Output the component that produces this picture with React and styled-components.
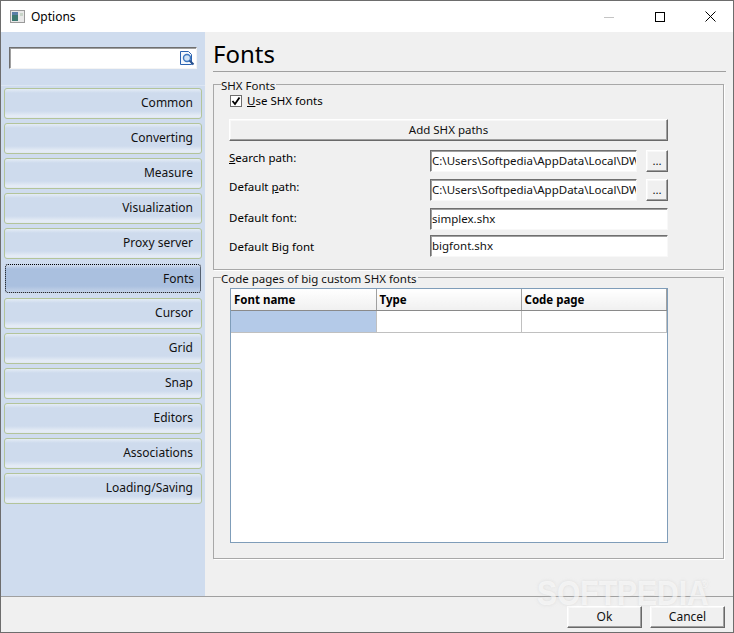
import React from "react";
import styled, { createGlobalStyle } from "styled-components";

const Global = createGlobalStyle`
  html, body {
    margin: 0;
    padding: 0;
    background: #f0f0f0;
  }
  * {
    box-sizing: border-box;
  }
`;

const Win = styled.div`
  position: relative;
  width: 734px;
  height: 633px;
  display: flex;
  flex-direction: column;
  border: 1px solid #6d6d6d;
  background: #f0f0f0;
  font-family: "Noto Sans", "Liberation Sans", sans-serif;
  font-size: 12px;
  color: #000;
  overflow: hidden;
`;
const TitleBar = styled.div`
  height: 31px;
  flex: none;
  background: #fff;
  display: flex;
  align-items: center;
  padding-left: 9px;
  gap: 6px;
`;
const TitleText = styled.span`
  flex: 1;
  font-size: 12px;
  margin-top: -1px;
`;
const WinBtn = styled.div`
  width: 45px;
  height: 31px;
  display: flex;
  align-items: center;
  justify-content: center;
`;
const Body = styled.div`
  flex: 1;
  display: flex;
  min-height: 0;
`;
const Side = styled.div`
  width: 204px;
  flex: none;
  background: #cfdcee;
`;
const SearchArea = styled.div`
  height: 54px;
  padding: 15px 8px 0 8px;
  border-bottom: 1px solid #dce6f3;
`;
const SearchBox = styled.div`
  width: 188px;
  height: 22px;
  background: #fff;
  border: 1px solid #f4f4f4;
  border-top: 1px solid #6f6f6f;
  border-left: 1px solid #6f6f6f;
  box-shadow: inset 1px 1px 0 #a0a0a0;
  display: flex;
  align-items: center;
  justify-content: flex-end;
  padding-right: 1px;
`;
const NavList = styled.div`
  display: flex;
  flex-direction: column;
  gap: 4px;
  padding: 2px 3px 0 3px;
`;
const NavBtn = styled.div`
  border-radius: 3px;
  border: 1px ${(p) => (p.$active ? "dotted #000" : "solid #b3c49a")};
  margin: ${(p) => (p.$active ? "1px" : "0")};
  height: ${(p) => (p.$active ? "29px" : "31px")};
  display: flex;
  align-items: center;
  justify-content: flex-end;
  padding-right: ${(p) => (p.$active ? "6px" : "8px")};
  padding-bottom: ${(p) => (p.$active ? "1px" : "3px")};
  color: #111;
  background: ${(p) =>
    p.$active
      ? "linear-gradient(#d0dcee 0, #aac0df 4px, #aac0df 21px, #c4d3e9 27px, #c4d3e9 100%)"
      : "linear-gradient(#e4ecf6 0, #cedbed 4px, #cedbed 22px, #e6edf6 27px, #dfe7f3 100%)"};
`;
const Main = styled.div`
  flex: 1;
  min-width: 0;
  padding: 6px 7px 0 8px;
  display: flex;
  flex-direction: column;
  font-size: 11.5px;
`;
const Heading = styled.div`
  font-size: 24px;
  line-height: 31px;
  height: 34px;
  border-bottom: 1px solid #a0a0a0;
`;
const Group = styled.fieldset`
  margin: ${(p) => p.$top}px 2px 0 0;
  height: ${(p) => p.$h}px;
  position: relative;
  border: 1px solid #a8a8a8;
  box-shadow: 1px 1px 0 #fff;
  min-width: 0;
  padding: 5px 55px 0 15px;
`;
const Legend = styled.div`
  position: absolute;
  top: -6px;
  left: 7px;
  padding: 0 1px 0 0;
  line-height: 14px;
  background: #f0f0f0;
  color: #111;
`;
const CheckRow = styled.label`
  display: flex;
  align-items: center;
  gap: 5px;
  height: 22px;
  & > span {
    margin-top: -2px;
  }
`;
const CheckMark = styled.div`
  width: 12px;
  height: 12px;
  background: #fff;
  border: 1px solid #6e6e6e;
  display: flex;
  align-items: center;
  justify-content: center;
  margin-left: 1px;
`;
const RaisedBtn = styled.div`
  height: 22px;
  width: ${(p) => p.$w || "auto"};
  display: flex;
  align-items: center;
  justify-content: center;
  padding-bottom: 2px;
  background: #f0f0f0;
  border: 1px solid;
  border-color: #fff #696969 #696969 #fff;
  box-shadow: inset -1px -1px 0 #a0a0a0, inset 1px 1px 0 #f8f8f8;
  flex: none;
  color: #111;
`;
const AddBtn = styled(RaisedBtn)`
  margin-top: 7px;
`;
const FieldRow = styled.div`
  display: flex;
  align-items: center;
  height: 22px;
  margin-top: ${(p) => p.$mt}px;
`;
const FieldLabel = styled.span`
  width: 201px;
  flex: none;
  margin-top: ${(p) => p.$up || 0}px;
`;
const TextInput = styled.div`
  flex: 1;
  min-width: 0;
  height: 22px;
  background: #fff;
  border: 1px solid #f8f8f8;
  border-top: 1px solid #6f6f6f;
  border-left: 1px solid #6f6f6f;
  box-shadow: inset 1px 1px 0 #a0a0a0;
  padding-left: 1px;
  line-height: 20px;
  white-space: nowrap;
  overflow: hidden;
  color: #111;
`;
const BrowseBtn = styled(RaisedBtn)`
  margin-left: 9px;
  width: 22px;
`;
const Under = styled.span`
  text-decoration: underline;
`;
const GridWrap = styled.div`
  height: 255px;
  border: 1px solid #7f9db9;
  background: #fff;
  margin: 5px 0 0 1px;
`;
const Table = styled.table`
  border-collapse: collapse;
  table-layout: fixed;
  width: 435px;
  & th {
    height: 21px;
    padding: 0 3px;
    text-align: left;
    font-size: 11.5px;
    font-weight: 700;
    background: linear-gradient(#ffffff, #f0f0f0);
    border-right: 1px solid #a0a0a0;
    border-bottom: 1px solid #8a8a8a;
  }
  & td {
    height: 22px;
    border-right: 1px solid #c0c0c0;
    border-bottom: 1px solid #c0c0c0;
    padding: 0;
  }
`;
const SelCell = styled.td`
  background: #b4cae8;
`;
const Footer = styled.div`
  height: 36px;
  flex: none;
  border-top: 1px solid #a0a0a0;
  display: flex;
  justify-content: flex-end;
  gap: 8px;
  padding: 9px 8px 0 0;
`;
const Watermark = styled.div`
  position: absolute;
  left: 536px;
  top: 578px;
  font-family: "Liberation Sans", sans-serif;
  font-size: 30px;
  line-height: 26px;
  height: 26px;
  font-weight: 700;
  color: rgba(255, 255, 255, 0.6);
  text-shadow: 0 0 3px rgba(190, 190, 190, 0.4);
  transform: scaleY(1.15);
  transform-origin: top left;
  pointer-events: none;
`;
const Reg = styled.span`
  position: absolute;
  left: 164px;
  top: 0;
  font-size: 9px;
  line-height: 10px;
  font-weight: 400;
`;

const navItems = [
  "Common",
  "Converting",
  "Measure",
  "Visualization",
  "Proxy server",
  "Fonts",
  "Cursor",
  "Grid",
  "Snap",
  "Editors",
  "Associations",
  "Loading/Saving",
];

const AppIcon = () => (
  <svg width="15" height="13" viewBox="0 0 15 13">
    <rect x="0.5" y="0.5" width="14" height="12" fill="#e8e8e8" stroke="#9a9a9a" />
    <rect x="2" y="2" width="6" height="9" fill="#3d7a72" />
    <rect x="2" y="2" width="6" height="3" fill="#5a7fa8" />
    <rect x="10" y="3" width="3" height="3" fill="#c8d4c8" />
  </svg>
);

const SearchIcon = () => (
  <svg width="16" height="16" viewBox="0 0 16 16">
    <path d="M1.5 1.5h8l3 3v10h-11z" fill="#f4f8fd" stroke="#2a62b0" />
    <circle cx="8" cy="8" r="3.5" fill="#cfe2f6" stroke="#3f78c0" strokeWidth="1.4" />
    <path d="M10.5 10.5l4 4" stroke="#26508f" strokeWidth="2" />
  </svg>
);

export default function App() {
  return (
    <Win>
      <Global />
      <TitleBar>
        <AppIcon />
        <TitleText>Options</TitleText>
        <WinBtn>
          <svg width="10" height="10" viewBox="0 0 10 10">
            <path d="M0 5.5h10" stroke="#c4c4c4" />
          </svg>
        </WinBtn>
        <WinBtn>
          <svg width="10" height="10" viewBox="0 0 10 10">
            <rect x="0.5" y="0.5" width="9" height="9" fill="none" stroke="#000" />
          </svg>
        </WinBtn>
        <WinBtn>
          <svg width="11" height="11" viewBox="0 0 11 11">
            <path d="M0.5 0.5l10 10M10.5 0.5l-10 10" stroke="#000" />
          </svg>
        </WinBtn>
      </TitleBar>
      <Body>
        <Side>
          <SearchArea>
            <SearchBox>
              <SearchIcon />
            </SearchBox>
          </SearchArea>
          <NavList>
            {navItems.map((n) => (
              <NavBtn key={n} $active={n === "Fonts"}>
                {n}
              </NavBtn>
            ))}
          </NavList>
        </Side>
        <Main>
          <Heading>Fonts</Heading>
          <Group $top={12} $h={186}>
            <Legend>SHX Fonts</Legend>
            <CheckRow>
              <CheckMark>
                <svg width="10" height="10" viewBox="0 0 10 10">
                  <path d="M1.5 5l2.5 3 4.5-6.5" fill="none" stroke="#000" strokeWidth="1.8" />
                </svg>
              </CheckMark>
              <span>
                <Under>U</Under>se SHX fonts
              </span>
            </CheckRow>
            <AddBtn>Add SHX paths</AddBtn>
            <FieldRow $mt={9}>
              <FieldLabel $up={-7}>
                <Under>S</Under>earch path:
              </FieldLabel>
              <TextInput>C:\Users\Softpedia\AppData\Local\DW</TextInput>
              <BrowseBtn>...</BrowseBtn>
            </FieldRow>
            <FieldRow $mt={7}>
              <FieldLabel $up={-7}>
                Default <Under>p</Under>ath:
              </FieldLabel>
              <TextInput>C:\Users\Softpedia\AppData\Local\DW</TextInput>
              <BrowseBtn>...</BrowseBtn>
            </FieldRow>
            <FieldRow $mt={7}>
              <FieldLabel $up={-3}>Default font:</FieldLabel>
              <TextInput>simplex.shx</TextInput>
            </FieldRow>
            <FieldRow $mt={5}>
              <FieldLabel>Default Big font</FieldLabel>
              <TextInput>bigfont.shx</TextInput>
            </FieldRow>
          </Group>
          <Group $top={7} $h={282}>
            <Legend>Code pages of big custom SHX fonts</Legend>
            <GridWrap>
              <Table>
                <colgroup>
                  <col width="145" />
                  <col width="145" />
                  <col width="145" />
                </colgroup>
                <thead>
                  <tr>
                    <th>Font name</th>
                    <th>Type</th>
                    <th>Code page</th>
                  </tr>
                </thead>
                <tbody>
                  <tr>
                    <SelCell />
                    <td />
                    <td />
                  </tr>
                </tbody>
              </Table>
            </GridWrap>
          </Group>
        </Main>
      </Body>
      <Footer>
        <RaisedBtn $w="75px">Ok</RaisedBtn>
        <RaisedBtn $w="75px">Cancel</RaisedBtn>
      </Footer>
      <Watermark>
        SOFTPEDIA<Reg>®</Reg>
      </Watermark>
    </Win>
  );
}
